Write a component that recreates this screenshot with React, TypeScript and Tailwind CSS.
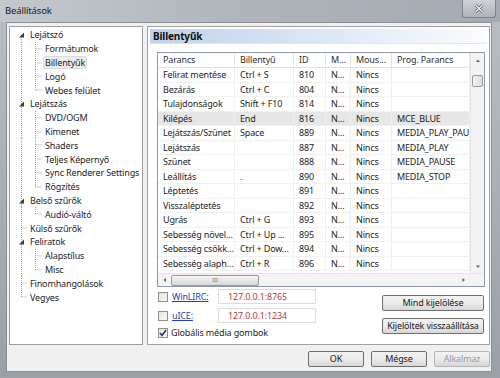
import React from "react";

type TreeItem = {
  label: string;
  level: 0 | 1;
  parent?: boolean;
  last?: boolean;
  first?: boolean;
  selected?: boolean;
};

const tree: TreeItem[] = [
  { label: "Lejátszó", level: 0, parent: true, first: true },
  { label: "Formátumok", level: 1 },
  { label: "Billentyűk", level: 1, selected: true },
  { label: "Logó", level: 1 },
  { label: "Webes felület", level: 1, last: true },
  { label: "Lejátszás", level: 0, parent: true },
  { label: "DVD/OGM", level: 1 },
  { label: "Kimenet", level: 1 },
  { label: "Shaders", level: 1 },
  { label: "Teljes Képernyő", level: 1 },
  { label: "Sync Renderer Settings", level: 1 },
  { label: "Rögzítés", level: 1, last: true },
  { label: "Belső szűrők", level: 0, parent: true },
  { label: "Audió-váltó", level: 1, last: true },
  { label: "Külső szűrők", level: 0 },
  { label: "Feliratok", level: 0, parent: true },
  { label: "Alapstílus", level: 1 },
  { label: "Misc", level: 1, last: true },
  { label: "Finomhangolások", level: 0 },
  { label: "Vegyes", level: 0, last: true },
];

const rows: string[][] = [
  ["Felirat mentése", "Ctrl + S", "810", "N...", "Nincs", ""],
  ["Bezárás", "Ctrl + C", "804", "N...", "Nincs", ""],
  ["Tulajdonságok", "Shift + F10", "814", "N...", "Nincs", ""],
  ["Kilépés", "End", "816", "N...", "Nincs", "MCE_BLUE"],
  ["Lejátszás/Szünet", "Space", "889", "N...", "Nincs", "MEDIA_PLAY_PAUSE"],
  ["Lejátszás", "", "887", "N...", "Nincs", "MEDIA_PLAY"],
  ["Szünet", "", "888", "N...", "Nincs", "MEDIA_PAUSE"],
  ["Leállítás", ".", "890", "N...", "Nincs", "MEDIA_STOP"],
  ["Léptetés", "", "891", "N...", "Nincs", ""],
  ["Visszaléptetés", "", "892", "N...", "Nincs", ""],
  ["Ugrás", "Ctrl + G", "893", "N...", "Nincs", ""],
  ["Sebesség növel...", "Ctrl + Up ...", "895", "N...", "Nincs", ""],
  ["Sebesség csökk...", "Ctrl + Dow...", "894", "N...", "Nincs", ""],
  ["Sebesség alaph...", "Ctrl + R", "896", "N...", "Nincs", ""],
];

const headers = ["Parancs", "Billentyű", "ID", "M...", "Mous...", "Prog. Parancs"];
const colW = ["w-[77px]", "w-[59px]", "w-[32px]", "w-[25px]", "w-[41px]", "w-[78px]"];

function TreeLines({ item }: { item: TreeItem }) {
  const h = 13.8;
  const mid = h / 2;
  if (item.level === 0) {
    return (
      <svg width="17" height={h} className="shrink-0">
        <line
          x1="11.5"
          x2="11.5"
          y1={item.first ? mid : 0}
          y2={item.last ? mid : h}
          stroke="#a0a0a0"
          strokeDasharray="1 1"
        />
        {item.parent ? (
          <path d="M9 9.5 L14 9.5 L14 4.5 Z" fill="#3c3c3c" />
        ) : (
          <line x1="11.5" x2="17" y1={mid} y2={mid} stroke="#a0a0a0" strokeDasharray="1 1" />
        )}
      </svg>
    );
  }
  return (
    <svg width="32" height={h} className="shrink-0">
      <line x1="11.5" x2="11.5" y1="0" y2={h} stroke="#a0a0a0" strokeDasharray="1 1" />
      <line x1="25.5" x2="25.5" y1="0" y2={item.last ? mid : h} stroke="#a0a0a0" strokeDasharray="1 1" />
      <line x1="25.5" x2="32" y1={mid} y2={mid} stroke="#a0a0a0" strokeDasharray="1 1" />
    </svg>
  );
}

function Checkbox({ checked }: { checked?: boolean }) {
  return (
    <div className="w-[10px] h-[10px] border border-[#8f8f8f] bg-gradient-to-br from-[#e2e2e2] to-[#fafafa] flex items-center justify-center shrink-0">
      {checked && (
        <svg width="8" height="8" viewBox="0 0 8 8">
          <path d="M1 4 L3 6.5 L7 1" stroke="#2a3a6a" strokeWidth="1.6" fill="none" />
        </svg>
      )}
    </div>
  );
}

function Button({ children, disabled, className = "" }: { children: React.ReactNode; disabled?: boolean; className?: string }) {
  return (
    <div
      className={`h-[16px] border rounded-[2px] flex items-center justify-center whitespace-nowrap bg-gradient-to-b from-[#f2f2f2] via-[#ebebeb] to-[#d6d6d6] ${
        disabled ? "border-[#b5b5b5] text-[#9a9a9a]" : "border-[#707070] text-[#1a1a1a]"
      } ${className}`}
    >
      {children}
    </div>
  );
}

function ScrollArrow({ dir }: { dir: "up" | "down" | "left" | "right" }) {
  const paths: Record<string, string> = {
    up: "M1 4 L3 1.5 L5 4 Z",
    down: "M1 1.5 L3 4 L5 1.5 Z",
    left: "M4 1 L1.5 3 L4 5 Z",
    right: "M1.5 1 L4 3 L1.5 5 Z",
  };
  return (
    <svg width="6" height="6" viewBox="0 0 6 6">
      <path d={paths[dir]} fill="#606060" />
    </svg>
  );
}

export default function App() {
  return (
    <div
      className="w-[500px] h-[378px] overflow-hidden flex flex-col bg-gradient-to-b from-[#b9bec4] via-[#a9afb6] to-[#9aa0a7] text-[#1e1e1e] tracking-[-0.15px]"
      style={{ fontFamily: '"Noto Sans", "Open Sans", sans-serif' }}
    >
      {/* Title bar */}
      <div className="h-[22px] flex items-start justify-between pl-[5px] pr-[4px] shrink-0 bg-gradient-to-r from-[#c3c8cd] via-[#aeb4ba] to-[#a4aab1]">
        <span className="text-[9.5px] mt-[4px] text-[#1a1a1a]">Beállítások</span>
        <div className="w-[34px] h-[18px] border border-[#7d848b] border-t-0 rounded-b-[3px] bg-gradient-to-b from-[#cfd3d7] to-[#aeb3b8] flex items-center justify-center">
          <svg width="10" height="9" viewBox="0 0 10 9">
            <path d="M1.5 1 L8.5 8 M8.5 1 L1.5 8" stroke="#555b61" strokeWidth="2.6" />
            <path d="M1.5 1 L8.5 8 M8.5 1 L1.5 8" stroke="#f4f4f4" strokeWidth="1.3" />
          </svg>
        </div>
      </div>

      {/* Client area */}
      <div className="ml-[6px] mr-[8px] h-[350px] bg-[#f0f0f0] border border-[#8a9097] flex flex-col text-[9px]">
        <div className="flex pt-[3px] pl-[2px] gap-[4px] h-[322px]">
          {/* Tree */}
          <div className="w-[134px] h-full bg-white border border-[#a0a0a0] pt-[1px] flex flex-col">
            {tree.map((item, i) => (
              <div key={i} className="flex items-center h-[13.8px] leading-none whitespace-nowrap">
                <TreeLines item={item} />
                <span
                  className={`ml-[1px] px-[1px] py-[1px] ${item.selected ? "bg-[#ececec] border border-[#dadada] rounded-[2px]" : "border border-transparent"}`}
                >
                  {item.label}
                </span>
              </div>
            ))}
          </div>

          {/* Right panel */}
          <div className="w-[343px] h-full bg-white border border-[#a0a0a0] flex flex-col px-[2px] pt-[2px]">
            <div className="h-[15px] bg-gradient-to-r from-[#bcd3ec] via-[#dbe7f5] to-[#fbfcfe] border-b border-[#dfe6ee] flex items-center pl-[3px] font-bold text-[10px] text-[#101010]">
              Billentyűk
            </div>

            <div className="ml-[7px] mt-[8px] w-[328px] h-[235px] border border-[#8e9aa6] flex flex-col">
              <div className="flex flex-1 min-h-0">
                <div className="w-[312px] flex flex-col">
                  {/* Header */}
                  <div className="h-[15px] flex border-b border-[#e2e2e2] shrink-0">
                    {headers.map((h, i) => (
                      <div
                        key={i}
                        className={`${colW[i]} shrink-0 border-r border-[#e4e4e4] pl-[5px] flex items-center overflow-hidden whitespace-nowrap text-[#303030]`}
                      >
                        {h}
                      </div>
                    ))}
                  </div>
                  {/* Rows */}
                  {rows.map((r, ri) => (
                    <div
                      key={ri}
                      className={`h-[14.5px] flex border-b border-[#f0f0f0] shrink-0 ${ri === 3 ? "bg-[#e6e6e6]" : ""}`}
                    >
                      {r.map((c, ci) => (
                        <div
                          key={ci}
                          className={`${colW[ci]} shrink-0 border-r border-[#eeeeee] pl-[5px] flex items-center overflow-hidden whitespace-nowrap`}
                        >
                          {c}
                        </div>
                      ))}
                    </div>
                  ))}
                </div>
                {/* Vertical scrollbar */}
                <div className="w-[14px] bg-[#f3f3f3] border-l border-[#e6e6e6] flex flex-col items-center">
                  <div className="h-[15px] flex items-center justify-center">
                    <ScrollArrow dir="up" />
                  </div>
                  <div className="w-[11px] h-[12px] mt-[7px] border border-[#9a9a9a] rounded-[2px] bg-gradient-to-r from-[#f4f4f4] to-[#dcdcdc]" />
                  <div className="flex-1" />
                  <div className="h-[12px] flex items-center justify-center">
                    <ScrollArrow dir="down" />
                  </div>
                </div>
              </div>
              {/* Horizontal scrollbar */}
              <div className="h-[13px] flex items-center bg-[#f3f3f3] border-t border-[#e6e6e6] shrink-0">
                <div className="w-[13px] flex items-center justify-center">
                  <ScrollArrow dir="left" />
                </div>
                <div className="w-[88px] h-[11px] border border-[#9a9a9a] rounded-[2px] bg-gradient-to-b from-[#f4f4f4] to-[#d8d8d8] flex items-center justify-center text-[6px] text-[#777] leading-none">
                  III
                </div>
                <div className="flex-1" />
                <div className="w-[13px] flex items-center justify-center">
                  <ScrollArrow dir="right" />
                </div>
                <div className="w-[14px]" />
              </div>
            </div>

            {/* Bottom controls */}
            <div className="flex ml-[8px] mt-[1px]">
              <div className="flex flex-col w-[220px]">
                <div className="flex items-center h-[17px] gap-[4px]">
                  <Checkbox />
                  <span className="w-[42px] text-[#1f3fb8] underline">WinLIRC:</span>
                  <div className="w-[98px] h-[15px] border border-[#dcdcdc] bg-white flex items-center pl-[9px] text-[#c03a3a]">
                    127.0.0.1:8765
                  </div>
                </div>
                <div className="flex items-center h-[17px] gap-[4px] mt-[2px]">
                  <Checkbox />
                  <span className="w-[42px] text-[#1f3fb8] underline">uICE:</span>
                  <div className="w-[98px] h-[15px] border border-[#dcdcdc] bg-white flex items-center pl-[9px] text-[#c03a3a]">
                    127.0.0.1:1234
                  </div>
                </div>
                <div className="flex items-center h-[15px] gap-[3px] mt-[1px]">
                  <Checkbox checked />
                  <span>Globális média gombok</span>
                </div>
              </div>
              <div className="flex flex-col ml-[4px] gap-[7px] pt-[7px]">
                <Button className="w-[102px]">Mind kijelölése</Button>
                <Button className="w-[102px]">Kijelöltek visszaállítása</Button>
              </div>
            </div>
          </div>
        </div>

        {/* Bottom buttons */}
        <div className="flex justify-end gap-[7px] pr-[1px] mt-[6px]">
          <Button className="w-[56px]">OK</Button>
          <Button className="w-[56px]">Mégse</Button>
          <Button className="w-[56px]" disabled>
            Alkalmaz
          </Button>
        </div>
      </div>
    </div>
  );
}
